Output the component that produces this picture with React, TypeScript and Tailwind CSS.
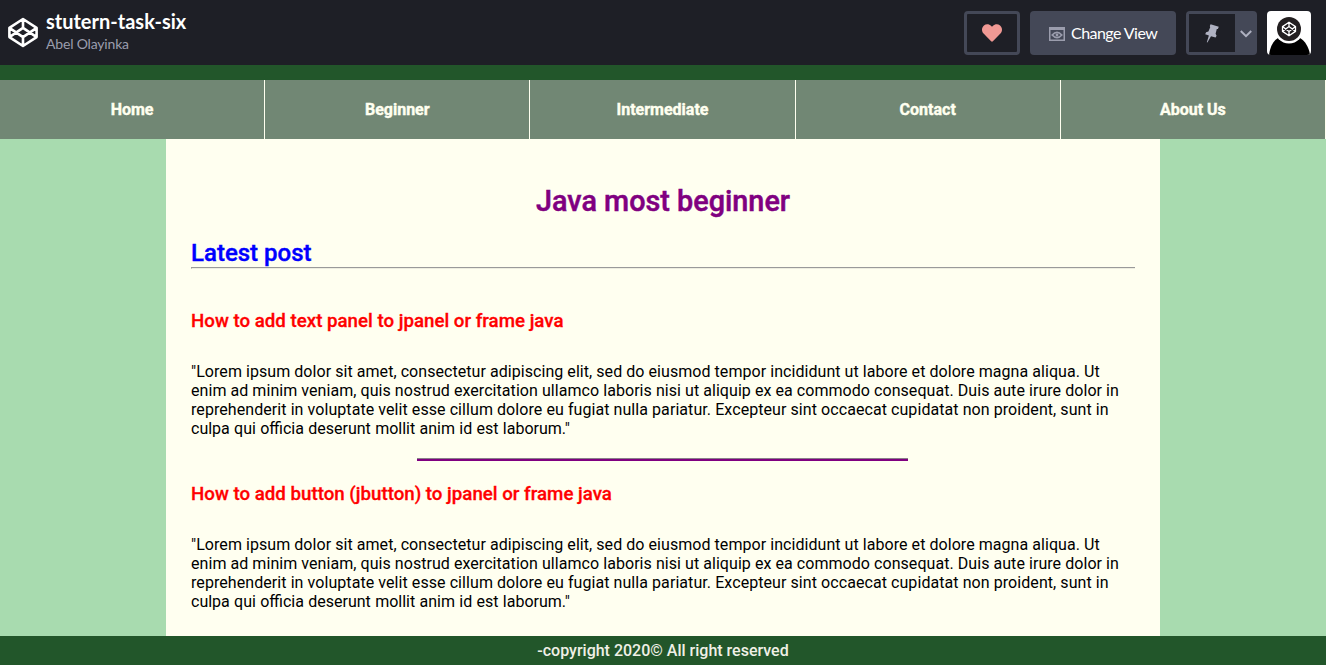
import { FaHeart } from "react-icons/fa";

const NAV = ["Home", "Beginner", "Intermediate", "Contact", "About Us"];

const LOREM = [
  { text: '"Lorem ipsum dolor sit amet, consectetur adipiscing elit, sed do eiusmod tempor incididunt ut labore et dolore magna aliqua. Ut', spacing: "tracking-[0.055px]" },
  { text: "enim ad minim veniam, quis nostrud exercitation ullamco laboris nisi ut aliquip ex ea commodo consequat. Duis aute irure dolor in", spacing: "tracking-[0.056px]" },
  { text: "reprehenderit in voluptate velit esse cillum dolore eu fugiat nulla pariatur. Excepteur sint occaecat cupidatat non proident, sunt in", spacing: "tracking-[0.07px]" },
  { text: 'culpa qui officia deserunt mollit anim id est laborum."', spacing: "[word-spacing:0.35px]" },
];

function Logo({ className }: { className: string }) {
  return (
    <svg viewBox="0 0 30 30" fill="none" stroke="currentColor" strokeWidth="2.6" strokeLinejoin="round" className={className}>
      <path d="M15 1.5 28.6 10.4V19.6L15 28.5 1.4 19.6V10.4ZM15 1.5V10.4M15 28.5V19.6M1.4 10.4 15 19.6 28.6 10.4M1.4 19.6 15 10.4 28.6 19.6" />
    </svg>
  );
}

function Avatar() {
  return (
    <svg viewBox="0 0 44 44" className="ml-[10px] h-11 w-11 rounded-[4px]">
      <rect width="44" height="44" fill="#fff" />
      <path d="M2 44C3 36 6 30 11 27H33C38 30 42 36 43 44Z" fill="#000" />
      <circle cx="22" cy="18" r="14.5" fill="#fff" />
      <circle cx="22" cy="18" r="12" fill="#231f20" />
      <path
        d="M22 11.2 28.5 15.6V20.4L22 24.8 15.5 20.4V15.6ZM22 11.2V15.6M22 24.8V20.4M15.5 15.6 22 20.4 28.5 15.6M15.5 20.4 22 15.6 28.5 20.4"
        fill="none"
        stroke="#fff"
        strokeWidth="1.3"
        strokeLinejoin="round"
      />
    </svg>
  );
}

function Header() {
  return (
    <header className="flex h-[65px] items-start bg-[#1e1f26] pl-2 pr-[15px] font-['Lato',sans-serif]">
      <Logo className="mt-[17px] h-[31px] w-[30px] text-white" />
      <div className="ml-2 mt-[9px]">
        <h1 className="text-[20px] font-bold leading-[25px] text-white">stutern-task-six</h1>
        <p className="text-[14px] leading-[20px] tracking-[-0.18px] text-[#9b9dad]">Abel Olayinka</p>
      </div>
      <div className="ml-auto mt-[11px] flex">
        <button className="flex h-11 w-14 items-center justify-center rounded-[4px] border-[3px] border-[#444857]">
          <FaHeart className="h-5 w-5 text-[#f19994]" />
        </button>
        <button className="ml-[10px] flex h-11 w-[146px] items-center rounded-[4px] bg-[#444857] pl-[19px] text-[16px] text-white">
          <svg viewBox="0 0 16 14" className="mt-px h-[14px] w-4 text-[#9b9dad]">
            <path d="M.75.75H15.25V13.25H.75Z" fill="none" stroke="currentColor" strokeWidth="1.5" />
            <path d="M0 0H16V3H0Z" fill="currentColor" />
            <path d="M3.2 8Q8 2.6 12.8 8 8 13.4 3.2 8Z" fill="none" stroke="currentColor" strokeWidth="1.7" />
            <circle cx="8" cy="8" r="1.4" fill="currentColor" />
          </svg>
          <span className="ml-[6px] whitespace-nowrap tracking-[-0.55px]">Change View</span>
        </button>
        <div className="ml-[10px] flex h-11 w-[71px] rounded-[4px] bg-[#444857] p-[3px]">
          <div className="flex w-[46px] items-center justify-center bg-[#1e1f26]">
            <svg viewBox="0 0 14 19" className="h-[19px] w-[14px]" fill="#afb1c1">
              <path d="M5.6.3 13.8 2.8 12.9 4.9 11.8 5.1 10.6 9.7 11.6 11.8 10.6 13.5 6 12.2 2.4 18.6 1.8 18.3 3.9 11.5.2 10.2 1.1 8.3 3.4 7.5 5.2 3.3 4.8 2Z" />
            </svg>
          </div>
          <svg viewBox="0 0 12 8" className="ml-[5px] mt-[16px] h-2 w-3" fill="none" stroke="#afb1c1" strokeWidth="2">
            <path d="M.8 1 6 6.2 11.2 1" />
          </svg>
        </div>
        <Avatar />
      </div>
    </header>
  );
}

function Post({ title }: { title: string }) {
  return (
    <article>
      <h3 className="text-[18.72px] font-medium leading-[22px] text-[red] [-webkit-text-stroke:0.3px_red]">{title}</h3>
      <p className="mt-[30px] text-[16px] leading-[19px] text-black">
        {LOREM.map((line) => (
          <span key={line.text} className={`block whitespace-nowrap ${line.spacing}`}>
            {line.text}
          </span>
        ))}
      </p>
    </article>
  );
}

export default function App() {
  return (
    <div className="flex h-[665px] flex-col overflow-hidden bg-[#a8dbaf] font-['Roboto',sans-serif]">
      <Header />
      <div className="h-[15px] shrink-0 bg-[#22562a]" />
      <nav className="grid h-[59px] shrink-0 grid-cols-5 bg-[#718774]">
        {NAV.map((item) => (
          <a key={item} className="flex items-center justify-center border-r border-[#fffff0] text-[16px] font-bold text-[#fffff0] [-webkit-text-stroke:0.4px_#fffff0]">
            {item}
          </a>
        ))}
      </nav>
      <main className="mx-auto h-[497px] w-[994px] bg-[#fffff0] px-[25px] pt-[43px]">
        <h1 className="text-center text-[28.8px] font-medium leading-[38px] text-[purple] [-webkit-text-stroke:0.5px_purple]">Java most beginner</h1>
        <h2 className="mt-[19px] text-[24px] font-medium leading-[28px] text-[blue] [-webkit-text-stroke:0.4px_blue]">Latest post</h2>
        <div className="mb-[41px] h-[2px] border-b border-l border-t border-b-[#eeeee0] border-l-[#9a9a9a] border-t-[#9a9a9a]" />
        <Post title="How to add text panel to jpanel or frame java" />
        <div className="mb-[22px] ml-[226px] mt-[20px] h-[3px] w-[491px] border-t border-[#8a808a] bg-[purple]" />
        <Post title="How to add button (jbutton) to jpanel or frame java" />
      </main>
      <footer className="flex h-[29px] shrink-0 items-center justify-center bg-[#22562a] text-[16px] font-medium text-[#f0f0e6]">
        -copyright 2020© All right reserved
      </footer>
    </div>
  );
}
